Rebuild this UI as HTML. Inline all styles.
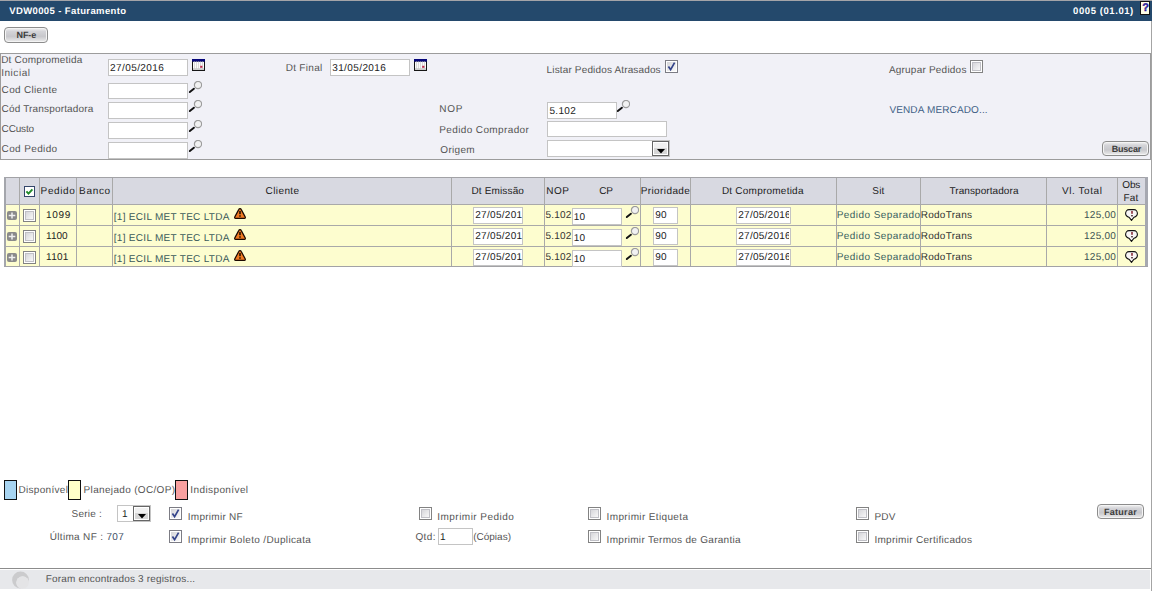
<!DOCTYPE html>
<html><head><meta charset="utf-8">
<style>
*{box-sizing:border-box}
html,body{margin:0;padding:0;background:#fff;width:1153px;height:591px;overflow:hidden;position:relative;font-family:"Liberation Sans",sans-serif}
.a{position:absolute}
.t{position:absolute;white-space:nowrap;font-size:10px;line-height:12px;color:#555;text-rendering:geometricPrecision}
.btn{position:absolute;border:1px solid #8c8c8c;border-radius:4px;background:linear-gradient(#f2f2f2 0,#d4d4d8 25%,#c8c8cc 60%,#ececec 100%);box-shadow:inset 0 0 0 1px #f4f4f4}
</style></head><body>
<svg width="0" height="0" style="position:absolute">
<defs>
<linearGradient id="cbg" x1="0" y1="0" x2="1" y2="1"><stop offset="0" stop-color="#d4d4d8"/><stop offset="1" stop-color="#fafafa"/></linearGradient>
</defs>
</svg>
<div class="a" style="left:0px;top:0px;width:1152px;height:1px;background:#a4a4a8"></div>
<div class="a" style="left:0px;top:1px;width:1152px;height:20px;background:#24496c"></div>
<div class="t" style="left:9.20px;top:6.00px;color:#fff;font-size:9.5px;font-weight:bold;letter-spacing:0.385px;">VDW0005 - Faturamento</div>
<div class="t" style="left:1073.10px;top:6.00px;color:#fff;font-size:9.5px;font-weight:bold;letter-spacing:0.573px;">0005 (01.01)</div>
<div class="a" style="left:1140px;top:1px;width:10px;height:14px;background:#fdfde6;border:1px solid #111;border-left-width:1.5px;border-bottom-width:1.5px"></div>
<div class="t" style="left:1140.5px;width:10px;text-align:center;top:2px;font-size:11px;font-weight:bold;color:#2a1a9a;-webkit-text-stroke:0.4px #2a1a9a">?</div>
<div class="a" style="left:1151px;top:21px;width:1px;height:570px;background:#a4a4a4"></div>
<div class="btn" style="left:4px;top:27px;width:44px;height:16px"></div>
<div class="t" style="left:16.50px;top:29.40px;color:#3c3c3c;font-size:9px;font-weight:bold;letter-spacing:-0.067px;">NF-e</div>
<div class="a" style="left:0px;top:53px;width:1151px;height:107px;background:#f1f1f7;border:1px solid #9c9c9c"></div>
<div class="t" style="left:1.20px;top:55.00px;color:#555;font-size:10px;font-weight:normal;letter-spacing:0.2px;">Dt Comprometida</div>
<div class="t" style="left:1.20px;top:67.50px;color:#555;font-size:10px;font-weight:normal;letter-spacing:0.533px;">Inicial</div>
<div class="a" style="left:108px;top:59px;width:80px;height:17px;background:#fff;border:1px solid #c4c4c4;"></div>
<div class="t" style="left:110.00px;top:63.00px;color:#222;font-size:10px;font-weight:normal;letter-spacing:0.422px;">27/05/2016</div>
<svg class="a" style="left:192px;top:59px" width="13" height="12" viewBox="0 0 13 12"><rect x="0" y="0" width="13" height="12" fill="#151515"/><rect x="1" y="2.5" width="11" height="8.3" fill="#fbfbfb"/><rect x="0" y="0" width="13" height="2.6" fill="#06067a"/><path d="M2.5 2.5v8M4.5 2.5v8M6.5 2.5v8M8.5 2.5v8M10.5 2.5v8" stroke="#d2d2d2" stroke-width="0.8"/><path d="M1 9.6h11" stroke="#c8c8c8" stroke-width="0.8"/><rect x="8.2" y="6.8" width="2.2" height="2" fill="#c02a4c"/></svg>
<div class="t" style="left:285.70px;top:63.00px;color:#555;font-size:10px;font-weight:normal;letter-spacing:0.3px;">Dt Final</div>
<div class="a" style="left:330px;top:59px;width:80px;height:17px;background:#fff;border:1px solid #c4c4c4;"></div>
<div class="t" style="left:332.20px;top:63.00px;color:#222;font-size:10px;font-weight:normal;letter-spacing:0.4px;">31/05/2016</div>
<svg class="a" style="left:414px;top:59px" width="13" height="12" viewBox="0 0 13 12"><rect x="0" y="0" width="13" height="12" fill="#151515"/><rect x="1" y="2.5" width="11" height="8.3" fill="#fbfbfb"/><rect x="0" y="0" width="13" height="2.6" fill="#06067a"/><path d="M2.5 2.5v8M4.5 2.5v8M6.5 2.5v8M8.5 2.5v8M10.5 2.5v8" stroke="#d2d2d2" stroke-width="0.8"/><path d="M1 9.6h11" stroke="#c8c8c8" stroke-width="0.8"/><rect x="8.2" y="6.8" width="2.2" height="2" fill="#c02a4c"/></svg>
<div class="t" style="left:546.60px;top:65.00px;color:#555;font-size:10px;font-weight:normal;letter-spacing:0.148px;">Listar Pedidos Atrasados</div>
<svg class="a" style="left:665px;top:60px" width="13" height="13" viewBox="0 0 13 13"><rect x="0.5" y="0.5" width="12" height="12" fill="#fff" stroke="#7c7c84"/><rect x="2" y="2" width="9" height="9" fill="url(#cbg)"/><path d="M3.4 6.4L5.6 9.6L9.6 2.6" stroke="#34448a" stroke-width="1.7" fill="none"/></svg>
<div class="t" style="left:888.90px;top:65.00px;color:#555;font-size:10px;font-weight:normal;letter-spacing:0.214px;">Agrupar Pedidos</div>
<svg class="a" style="left:970px;top:60px" width="13" height="13" viewBox="0 0 13 13"><rect x="0.5" y="0.5" width="12" height="12" fill="#fff" stroke="#828282"/><rect x="2.5" y="2.5" width="8" height="8" fill="url(#cbg)" stroke="#c0c0c6" stroke-width="1"/></svg>
<div class="t" style="left:1.60px;top:85.00px;color:#555;font-size:10px;font-weight:normal;letter-spacing:0.32px;">Cod Cliente</div>
<div class="a" style="left:108px;top:83px;width:80px;height:16px;background:#fff;border:1px solid #c4c4c4;"></div>
<svg class="a" style="left:188px;top:81px" width="14" height="13" viewBox="0 0 14 13"><circle cx="10" cy="4" r="3.6" fill="#f2f2f2" stroke="#9c9c9c" stroke-width="1.2"/><path d="M1.8 11.1L5.9 7.7" stroke="#111" stroke-width="1.9" stroke-linecap="round"/></svg>
<div class="t" style="left:1.60px;top:104.40px;color:#555;font-size:10px;font-weight:normal;letter-spacing:0.165px;">Cód Transportadora</div>
<div class="a" style="left:108px;top:102px;width:80px;height:17px;background:#fff;border:1px solid #c4c4c4;"></div>
<svg class="a" style="left:188px;top:100px" width="14" height="13" viewBox="0 0 14 13"><circle cx="10" cy="4" r="3.6" fill="#f2f2f2" stroke="#9c9c9c" stroke-width="1.2"/><path d="M1.8 11.1L5.9 7.7" stroke="#111" stroke-width="1.9" stroke-linecap="round"/></svg>
<div class="t" style="left:439.30px;top:104.00px;color:#555;font-size:10px;font-weight:normal;letter-spacing:0.7px;">NOP</div>
<div class="a" style="left:547px;top:102px;width:70px;height:17px;background:#fff;border:1px solid #c4c4c4;"></div>
<div class="t" style="left:549.40px;top:106.00px;color:#222;font-size:10px;font-weight:normal;letter-spacing:0.325px;">5.102</div>
<svg class="a" style="left:616px;top:100px" width="14" height="13" viewBox="0 0 14 13"><circle cx="10" cy="4" r="3.6" fill="#f2f2f2" stroke="#9c9c9c" stroke-width="1.2"/><path d="M1.8 11.1L5.9 7.7" stroke="#111" stroke-width="1.9" stroke-linecap="round"/></svg>
<div class="t" style="left:889.40px;top:104.50px;color:#3f5f86;font-size:10px;font-weight:normal;letter-spacing:0.14px;">VENDA MERCADO...</div>
<div class="t" style="left:1.60px;top:124.00px;color:#555;font-size:10px;font-weight:normal;letter-spacing:-0.16px;">CCusto</div>
<div class="a" style="left:108px;top:122px;width:80px;height:17px;background:#fff;border:1px solid #c4c4c4;"></div>
<svg class="a" style="left:188px;top:120px" width="14" height="13" viewBox="0 0 14 13"><circle cx="10" cy="4" r="3.6" fill="#f2f2f2" stroke="#9c9c9c" stroke-width="1.2"/><path d="M1.8 11.1L5.9 7.7" stroke="#111" stroke-width="1.9" stroke-linecap="round"/></svg>
<div class="t" style="left:439.30px;top:124.70px;color:#555;font-size:10px;font-weight:normal;letter-spacing:0.373px;">Pedido Comprador</div>
<div class="a" style="left:547px;top:121px;width:120px;height:16px;background:#fff;border:1px solid #c4c4c4;"></div>
<div class="t" style="left:1.60px;top:144.20px;color:#555;font-size:10px;font-weight:normal;letter-spacing:0.367px;">Cod Pedido</div>
<div class="a" style="left:108px;top:142px;width:80px;height:17px;background:#fff;border:1px solid #c4c4c4;"></div>
<svg class="a" style="left:188px;top:140px" width="14" height="13" viewBox="0 0 14 13"><circle cx="10" cy="4" r="3.6" fill="#f2f2f2" stroke="#9c9c9c" stroke-width="1.2"/><path d="M1.8 11.1L5.9 7.7" stroke="#111" stroke-width="1.9" stroke-linecap="round"/></svg>
<div class="t" style="left:440.30px;top:144.80px;color:#555;font-size:10px;font-weight:normal;letter-spacing:0.3px;">Origem</div>
<div class="a" style="left:547px;top:140px;width:123px;height:17px;background:#fff;border:1px solid #c4c4c4;"></div>
<div class="a" style="left:652px;top:141px;width:17px;height:15px;border:1px solid #666;box-shadow:inset 0 0 0 1px #fff;background:linear-gradient(#f0f0f0 0,#f0f0f0 45%,#d6d6d6 45%,#d6d6d6 100%)"></div>
<svg class="a" style="left:656.5px;top:149px" width="8" height="5"><path d="M0 0H8L4 4.5Z" fill="#000"/></svg>
<div class="btn" style="left:1102px;top:141px;width:47px;height:15px"></div>
<div class="t" style="left:1111.70px;top:142.80px;color:#3c3c3c;font-size:9px;font-weight:bold;letter-spacing:-0.2px;">Buscar</div>
<div class="a" style="left:4px;top:177px;width:1144px;height:90px;background:#fdfdcf"></div>
<div class="a" style="left:4px;top:177px;width:1144px;height:28px;background:#d8d9e1"></div>
<div class="a" style="left:4px;top:204px;width:1144px;height:1px;background:#a9a9a9"></div>
<div class="a" style="left:4px;top:225px;width:1144px;height:1px;background:#a9a9a9"></div>
<div class="a" style="left:4px;top:246px;width:1144px;height:1px;background:#a9a9a9"></div>
<div class="a" style="left:19px;top:177px;width:1px;height:90px;background:#a9a9a9"></div>
<div class="a" style="left:39px;top:177px;width:1px;height:90px;background:#a9a9a9"></div>
<div class="a" style="left:76px;top:177px;width:1px;height:90px;background:#a9a9a9"></div>
<div class="a" style="left:112px;top:177px;width:1px;height:90px;background:#a9a9a9"></div>
<div class="a" style="left:451px;top:177px;width:1px;height:90px;background:#a9a9a9"></div>
<div class="a" style="left:544px;top:177px;width:1px;height:90px;background:#a9a9a9"></div>
<div class="a" style="left:640px;top:177px;width:1px;height:90px;background:#a9a9a9"></div>
<div class="a" style="left:690px;top:177px;width:1px;height:90px;background:#a9a9a9"></div>
<div class="a" style="left:836px;top:177px;width:1px;height:90px;background:#a9a9a9"></div>
<div class="a" style="left:920px;top:177px;width:1px;height:90px;background:#a9a9a9"></div>
<div class="a" style="left:1046px;top:177px;width:1px;height:90px;background:#a9a9a9"></div>
<div class="a" style="left:1117px;top:177px;width:1px;height:90px;background:#a9a9a9"></div>
<div class="a" style="left:4px;top:177px;width:1144px;height:1px;background:#a2a2a6"></div>
<div class="a" style="left:4px;top:177px;width:2px;height:90px;background:#a4a6ac"></div>
<div class="a" style="left:1145px;top:177px;width:3px;height:90px;background:#a6a8b0"></div>
<div class="a" style="left:4px;top:266px;width:1144px;height:1px;background:#a2a2a6"></div>
<svg class="a" style="left:24px;top:186px" width="11" height="11" viewBox="0 0 11 11"><rect x="0.5" y="0.5" width="10" height="10" fill="#fff" stroke="#34466a"/><path d="M2.4 5.4L4.5 7.6L8.4 3.4" stroke="#208a2a" stroke-width="2" fill="none"/></svg>
<div class="t" style="left:40.60px;top:185.90px;color:#222;font-size:10px;font-weight:normal;letter-spacing:0.62px;">Pedido</div>
<div class="t" style="left:79.10px;top:185.90px;color:#222;font-size:10px;font-weight:normal;letter-spacing:0.675px;">Banco</div>
<div class="t" style="left:265.50px;top:185.90px;color:#222;font-size:10px;font-weight:normal;letter-spacing:0.417px;">Cliente</div>
<div class="t" style="left:471.50px;top:185.90px;color:#222;font-size:10px;font-weight:normal;letter-spacing:0.144px;">Dt Emissão</div>
<div class="t" style="left:546.20px;top:185.90px;color:#222;font-size:10px;font-weight:normal;letter-spacing:0.55px;">NOP</div>
<div class="t" style="left:599.20px;top:185.90px;color:#222;font-size:10px;font-weight:normal;letter-spacing:-0.2px;">CP</div>
<div class="t" style="left:640.70px;top:185.90px;color:#222;font-size:10px;font-weight:normal;letter-spacing:0.4px;">Prioridade</div>
<div class="t" style="left:721.90px;top:185.90px;color:#222;font-size:10px;font-weight:normal;letter-spacing:0.229px;">Dt Comprometida</div>
<div class="t" style="left:872.30px;top:185.90px;color:#222;font-size:10px;font-weight:normal;letter-spacing:0.2px;">Sit</div>
<div class="t" style="left:949.40px;top:185.90px;color:#222;font-size:10px;font-weight:normal;letter-spacing:0.085px;">Transportadora</div>
<div class="t" style="left:1062.10px;top:185.90px;color:#222;font-size:10px;font-weight:normal;letter-spacing:0.55px;">Vl. Total</div>
<div class="t" style="left:1122.30px;top:179.90px;color:#222;font-size:10px;font-weight:normal;letter-spacing:-0.15px;">Obs</div>
<div class="t" style="left:1123.40px;top:192.60px;color:#222;font-size:10px;font-weight:normal;letter-spacing:0.2px;">Fat</div>
<svg class="a" style="left:7px;top:211px" width="10" height="9" viewBox="0 0 10 9"><rect x="0" y="0" width="10" height="9" rx="2" fill="#8a8a8a"/><path d="M5 1.5v6M1.7 4.5h6.6" stroke="#f0f0f0" stroke-width="1.5"/></svg>
<svg class="a" style="left:23px;top:209px" width="13" height="13" viewBox="0 0 13 13"><rect x="0.5" y="0.5" width="12" height="12" fill="#fff" stroke="#828282"/><rect x="2.5" y="2.5" width="8" height="8" fill="url(#cbg)" stroke="#c0c0c6" stroke-width="1"/></svg>
<div class="t" style="left:46.10px;top:210.10px;color:#222;font-size:10px;font-weight:normal;letter-spacing:0.633px;">1099</div>
<div class="t" style="left:113.70px;top:211.90px;color:#3a5a5a;font-size:10px;font-weight:normal;letter-spacing:0.305px;">[1] ECIL MET TEC LTDA</div>
<svg class="a" style="left:234px;top:208px" width="12" height="11" viewBox="0 0 12 11"><path d="M6 0.7C6.6 0.7 7 1 7.3 1.6L11.2 8.9C11.6 9.7 11.3 10.4 10.4 10.4H1.6C0.7 10.4 0.4 9.7 0.8 8.9L4.7 1.6C5 1 5.4 0.7 6 0.7Z" fill="#f07a22" stroke="#1a0800" stroke-width="1.2"/><rect x="5.2" y="3" width="1.6" height="3.2" fill="#241000"/><rect x="5.2" y="7.3" width="1.6" height="1.4" fill="#241000"/></svg>
<div class="a" style="left:473px;top:207px;width:50px;height:17px;background:#fff;border:1px solid #c4c4c4;overflow:hidden"></div>
<div class="t" style="left:475.20px;top:209.80px;color:#222;font-size:10px;font-weight:normal;letter-spacing:0.313px;">27/05/201</div>
<div class="t" style="left:545.60px;top:209.80px;color:#333;font-size:10px;font-weight:normal;letter-spacing:0.175px;">5.102</div>
<div class="a" style="left:572px;top:208px;width:50px;height:17px;background:#fff;border:1px solid #c4c4c4;"></div>
<div class="t" style="left:573.80px;top:211.80px;color:#222;font-size:10px;font-weight:normal;letter-spacing:0.25px;">10</div>
<svg class="a" style="left:625px;top:206px" width="14" height="13" viewBox="0 0 14 13"><circle cx="10" cy="4" r="3.6" fill="#f2f2f2" stroke="#9c9c9c" stroke-width="1.2"/><path d="M1.8 11.1L5.9 7.7" stroke="#111" stroke-width="1.9" stroke-linecap="round"/></svg>
<div class="a" style="left:653px;top:207px;width:25px;height:17px;background:#fff;border:1px solid #c4c4c4;"></div>
<div class="t" style="left:655.20px;top:209.80px;color:#222;font-size:10px;font-weight:normal;letter-spacing:0.25px;">90</div>
<div class="a" style="left:736px;top:207px;width:55px;height:17px;background:#fff;border:1px solid #c4c4c4;"></div>
<div class="t" style="left:738.30px;top:209.80px;color:#222;font-size:10px;font-weight:normal;letter-spacing:0.25px;width:51px;overflow:hidden">27/05/2016</div>
<div class="t" style="left:836.70px;top:210.30px;color:#3a6060;font-size:10px;font-weight:normal;letter-spacing:0.443px;">Pedido Separado</div>
<div class="t" style="left:920.70px;top:210.30px;color:#333;font-size:10px;font-weight:normal;letter-spacing:0.275px;">RodoTrans</div>
<div class="t" style="left:1084.00px;top:209.80px;color:#3c5252;font-size:10px;font-weight:normal;letter-spacing:0.26px;">125,00</div>
<svg class="a" style="left:1125px;top:209px" width="13" height="12" viewBox="0 0 13 12"><path d="M4 0.6H9C11 0.6 12.4 2.5 12.4 4.5C12.4 6.4 10.6 7.8 8.6 8.6L6.5 11.4L4.4 8.6C2.4 7.8 0.6 6.4 0.6 4.5C0.6 2.5 2 0.6 4 0.6Z" fill="#f8f6f6" stroke="#111" stroke-width="1.1"/><rect x="6.3" y="2" width="1.4" height="2.8" fill="#7a1020"/><rect x="6.3" y="6" width="1.4" height="1.4" fill="#2a0a10"/></svg>
<svg class="a" style="left:7px;top:232px" width="10" height="9" viewBox="0 0 10 9"><rect x="0" y="0" width="10" height="9" rx="2" fill="#8a8a8a"/><path d="M5 1.5v6M1.7 4.5h6.6" stroke="#f0f0f0" stroke-width="1.5"/></svg>
<svg class="a" style="left:23px;top:230px" width="13" height="13" viewBox="0 0 13 13"><rect x="0.5" y="0.5" width="12" height="12" fill="#fff" stroke="#828282"/><rect x="2.5" y="2.5" width="8" height="8" fill="url(#cbg)" stroke="#c0c0c6" stroke-width="1"/></svg>
<div class="t" style="left:46.10px;top:231.10px;color:#222;font-size:10px;font-weight:normal;letter-spacing:-0.0px;">1100</div>
<div class="t" style="left:113.70px;top:232.90px;color:#3a5a5a;font-size:10px;font-weight:normal;letter-spacing:0.305px;">[1] ECIL MET TEC LTDA</div>
<svg class="a" style="left:234px;top:229px" width="12" height="11" viewBox="0 0 12 11"><path d="M6 0.7C6.6 0.7 7 1 7.3 1.6L11.2 8.9C11.6 9.7 11.3 10.4 10.4 10.4H1.6C0.7 10.4 0.4 9.7 0.8 8.9L4.7 1.6C5 1 5.4 0.7 6 0.7Z" fill="#f07a22" stroke="#1a0800" stroke-width="1.2"/><rect x="5.2" y="3" width="1.6" height="3.2" fill="#241000"/><rect x="5.2" y="7.3" width="1.6" height="1.4" fill="#241000"/></svg>
<div class="a" style="left:473px;top:228px;width:50px;height:17px;background:#fff;border:1px solid #c4c4c4;overflow:hidden"></div>
<div class="t" style="left:475.20px;top:230.80px;color:#222;font-size:10px;font-weight:normal;letter-spacing:0.313px;">27/05/201</div>
<div class="t" style="left:545.60px;top:230.80px;color:#333;font-size:10px;font-weight:normal;letter-spacing:0.175px;">5.102</div>
<div class="a" style="left:572px;top:229px;width:50px;height:17px;background:#fff;border:1px solid #c4c4c4;"></div>
<div class="t" style="left:573.80px;top:232.80px;color:#222;font-size:10px;font-weight:normal;letter-spacing:0.25px;">10</div>
<svg class="a" style="left:625px;top:227px" width="14" height="13" viewBox="0 0 14 13"><circle cx="10" cy="4" r="3.6" fill="#f2f2f2" stroke="#9c9c9c" stroke-width="1.2"/><path d="M1.8 11.1L5.9 7.7" stroke="#111" stroke-width="1.9" stroke-linecap="round"/></svg>
<div class="a" style="left:653px;top:228px;width:25px;height:17px;background:#fff;border:1px solid #c4c4c4;"></div>
<div class="t" style="left:655.20px;top:230.80px;color:#222;font-size:10px;font-weight:normal;letter-spacing:0.25px;">90</div>
<div class="a" style="left:736px;top:228px;width:55px;height:17px;background:#fff;border:1px solid #c4c4c4;"></div>
<div class="t" style="left:738.30px;top:230.80px;color:#222;font-size:10px;font-weight:normal;letter-spacing:0.25px;width:51px;overflow:hidden">27/05/2016</div>
<div class="t" style="left:836.70px;top:231.30px;color:#3a6060;font-size:10px;font-weight:normal;letter-spacing:0.443px;">Pedido Separado</div>
<div class="t" style="left:920.70px;top:231.30px;color:#333;font-size:10px;font-weight:normal;letter-spacing:0.275px;">RodoTrans</div>
<div class="t" style="left:1084.00px;top:230.80px;color:#3c5252;font-size:10px;font-weight:normal;letter-spacing:0.26px;">125,00</div>
<svg class="a" style="left:1125px;top:230px" width="13" height="12" viewBox="0 0 13 12"><path d="M4 0.6H9C11 0.6 12.4 2.5 12.4 4.5C12.4 6.4 10.6 7.8 8.6 8.6L6.5 11.4L4.4 8.6C2.4 7.8 0.6 6.4 0.6 4.5C0.6 2.5 2 0.6 4 0.6Z" fill="#f8f6f6" stroke="#111" stroke-width="1.1"/><rect x="6.3" y="2" width="1.4" height="2.8" fill="#7a1020"/><rect x="6.3" y="6" width="1.4" height="1.4" fill="#2a0a10"/></svg>
<svg class="a" style="left:7px;top:253px" width="10" height="9" viewBox="0 0 10 9"><rect x="0" y="0" width="10" height="9" rx="2" fill="#8a8a8a"/><path d="M5 1.5v6M1.7 4.5h6.6" stroke="#f0f0f0" stroke-width="1.5"/></svg>
<svg class="a" style="left:23px;top:251px" width="13" height="13" viewBox="0 0 13 13"><rect x="0.5" y="0.5" width="12" height="12" fill="#fff" stroke="#828282"/><rect x="2.5" y="2.5" width="8" height="8" fill="url(#cbg)" stroke="#c0c0c6" stroke-width="1"/></svg>
<div class="t" style="left:46.10px;top:252.10px;color:#222;font-size:10px;font-weight:normal;letter-spacing:0.233px;">1101</div>
<div class="t" style="left:113.70px;top:253.90px;color:#3a5a5a;font-size:10px;font-weight:normal;letter-spacing:0.305px;">[1] ECIL MET TEC LTDA</div>
<svg class="a" style="left:234px;top:250px" width="12" height="11" viewBox="0 0 12 11"><path d="M6 0.7C6.6 0.7 7 1 7.3 1.6L11.2 8.9C11.6 9.7 11.3 10.4 10.4 10.4H1.6C0.7 10.4 0.4 9.7 0.8 8.9L4.7 1.6C5 1 5.4 0.7 6 0.7Z" fill="#f07a22" stroke="#1a0800" stroke-width="1.2"/><rect x="5.2" y="3" width="1.6" height="3.2" fill="#241000"/><rect x="5.2" y="7.3" width="1.6" height="1.4" fill="#241000"/></svg>
<div class="a" style="left:473px;top:249px;width:50px;height:17px;background:#fff;border:1px solid #c4c4c4;overflow:hidden"></div>
<div class="t" style="left:475.20px;top:251.80px;color:#222;font-size:10px;font-weight:normal;letter-spacing:0.313px;">27/05/201</div>
<div class="t" style="left:545.60px;top:251.80px;color:#333;font-size:10px;font-weight:normal;letter-spacing:0.175px;">5.102</div>
<div class="a" style="left:572px;top:250px;width:50px;height:17px;background:#fff;border:1px solid #c4c4c4;"></div>
<div class="t" style="left:573.80px;top:253.80px;color:#222;font-size:10px;font-weight:normal;letter-spacing:0.25px;">10</div>
<svg class="a" style="left:625px;top:248px" width="14" height="13" viewBox="0 0 14 13"><circle cx="10" cy="4" r="3.6" fill="#f2f2f2" stroke="#9c9c9c" stroke-width="1.2"/><path d="M1.8 11.1L5.9 7.7" stroke="#111" stroke-width="1.9" stroke-linecap="round"/></svg>
<div class="a" style="left:653px;top:249px;width:25px;height:17px;background:#fff;border:1px solid #c4c4c4;"></div>
<div class="t" style="left:655.20px;top:251.80px;color:#222;font-size:10px;font-weight:normal;letter-spacing:0.25px;">90</div>
<div class="a" style="left:736px;top:249px;width:55px;height:17px;background:#fff;border:1px solid #c4c4c4;"></div>
<div class="t" style="left:738.30px;top:251.80px;color:#222;font-size:10px;font-weight:normal;letter-spacing:0.25px;width:51px;overflow:hidden">27/05/2016</div>
<div class="t" style="left:836.70px;top:252.30px;color:#3a6060;font-size:10px;font-weight:normal;letter-spacing:0.443px;">Pedido Separado</div>
<div class="t" style="left:920.70px;top:252.30px;color:#333;font-size:10px;font-weight:normal;letter-spacing:0.275px;">RodoTrans</div>
<div class="t" style="left:1084.00px;top:251.80px;color:#3c5252;font-size:10px;font-weight:normal;letter-spacing:0.26px;">125,00</div>
<svg class="a" style="left:1125px;top:251px" width="13" height="12" viewBox="0 0 13 12"><path d="M4 0.6H9C11 0.6 12.4 2.5 12.4 4.5C12.4 6.4 10.6 7.8 8.6 8.6L6.5 11.4L4.4 8.6C2.4 7.8 0.6 6.4 0.6 4.5C0.6 2.5 2 0.6 4 0.6Z" fill="#f8f6f6" stroke="#111" stroke-width="1.1"/><rect x="6.3" y="2" width="1.4" height="2.8" fill="#7a1020"/><rect x="6.3" y="6" width="1.4" height="1.4" fill="#2a0a10"/></svg>
<div class="a" style="left:4px;top:480px;width:13px;height:20px;border:1px solid #111;background:#a8d4f0"></div>
<div class="t" style="left:18.50px;top:485.00px;color:#555;font-size:10px;font-weight:normal;letter-spacing:0.3px;">Disponível</div>
<div class="a" style="left:68px;top:480px;width:13px;height:20px;border:1px solid #111;background:#ffffc8"></div>
<div class="t" style="left:83.60px;top:485.00px;color:#555;font-size:10px;font-weight:normal;letter-spacing:0.331px;">Planejado (OC/OP)</div>
<div class="a" style="left:175px;top:480px;width:13px;height:20px;border:1px solid #111;background:#f8a0a0"></div>
<div class="t" style="left:190.30px;top:485.00px;color:#555;font-size:10px;font-weight:normal;letter-spacing:0.4px;">Indisponível</div>
<div class="t" style="left:71.60px;top:509.00px;color:#555;font-size:10px;font-weight:normal;letter-spacing:0.233px;">Serie :</div>
<div class="a" style="left:117px;top:505px;width:34px;height:17px;background:#fff;border:1px solid #c4c4c4;"></div>
<div class="t" style="left:122.00px;top:509.00px;color:#222;font-size:10px;font-weight:normal;letter-spacing:0.25px;">1</div>
<div class="a" style="left:133px;top:506px;width:17px;height:15px;border:1px solid #666;box-shadow:inset 0 0 0 1px #fff;background:linear-gradient(#f0f0f0 0,#f0f0f0 45%,#d6d6d6 45%,#d6d6d6 100%)"></div>
<svg class="a" style="left:137.5px;top:514px" width="8" height="5"><path d="M0 0H8L4 4.5Z" fill="#000"/></svg>
<svg class="a" style="left:169px;top:507px" width="13" height="13" viewBox="0 0 13 13"><rect x="0.5" y="0.5" width="12" height="12" fill="#fff" stroke="#7c7c84"/><rect x="2" y="2" width="9" height="9" fill="url(#cbg)"/><path d="M3.4 6.4L5.6 9.6L9.6 2.6" stroke="#34448a" stroke-width="1.7" fill="none"/></svg>
<div class="t" style="left:187.80px;top:511.80px;color:#555;font-size:10px;font-weight:normal;letter-spacing:0.26px;">Imprimir NF</div>
<div class="t" style="left:49.70px;top:531.60px;color:#555;font-size:10px;font-weight:normal;letter-spacing:0.329px;">Última NF : <span style="color:#3e4e66">707</span></div>
<svg class="a" style="left:169px;top:530px" width="13" height="13" viewBox="0 0 13 13"><rect x="0.5" y="0.5" width="12" height="12" fill="#fff" stroke="#7c7c84"/><rect x="2" y="2" width="9" height="9" fill="url(#cbg)"/><path d="M3.4 6.4L5.6 9.6L9.6 2.6" stroke="#34448a" stroke-width="1.7" fill="none"/></svg>
<div class="t" style="left:187.80px;top:534.70px;color:#555;font-size:10px;font-weight:normal;letter-spacing:0.344px;">Imprimir Boleto /Duplicata</div>
<svg class="a" style="left:419px;top:507px" width="13" height="13" viewBox="0 0 13 13"><rect x="0.5" y="0.5" width="12" height="12" fill="#fff" stroke="#828282"/><rect x="2.5" y="2.5" width="8" height="8" fill="url(#cbg)" stroke="#c0c0c6" stroke-width="1"/></svg>
<div class="t" style="left:437.30px;top:511.80px;color:#555;font-size:10px;font-weight:normal;letter-spacing:0.464px;">Imprimir Pedido</div>
<div class="t" style="left:415.40px;top:532.10px;color:#555;font-size:10px;font-weight:normal;letter-spacing:0.433px;">Qtd:</div>
<div class="a" style="left:438px;top:528px;width:35px;height:17px;background:#fff;border:1px solid #c4c4c4;"></div>
<div class="t" style="left:439.90px;top:532.10px;color:#222;font-size:10px;font-weight:normal;letter-spacing:0.25px;">1</div>
<div class="t" style="left:473.20px;top:532.10px;color:#555;font-size:10px;font-weight:normal;letter-spacing:0.0px;">(Cópias)</div>
<svg class="a" style="left:588px;top:507px" width="13" height="13" viewBox="0 0 13 13"><rect x="0.5" y="0.5" width="12" height="12" fill="#fff" stroke="#828282"/><rect x="2.5" y="2.5" width="8" height="8" fill="url(#cbg)" stroke="#c0c0c6" stroke-width="1"/></svg>
<div class="t" style="left:606.60px;top:511.80px;color:#555;font-size:10px;font-weight:normal;letter-spacing:0.362px;">Imprimir Etiqueta</div>
<svg class="a" style="left:588px;top:530px" width="13" height="13" viewBox="0 0 13 13"><rect x="0.5" y="0.5" width="12" height="12" fill="#fff" stroke="#828282"/><rect x="2.5" y="2.5" width="8" height="8" fill="url(#cbg)" stroke="#c0c0c6" stroke-width="1"/></svg>
<div class="t" style="left:606.60px;top:534.50px;color:#555;font-size:10px;font-weight:normal;letter-spacing:0.288px;">Imprimir Termos de Garantia</div>
<svg class="a" style="left:856px;top:507px" width="13" height="13" viewBox="0 0 13 13"><rect x="0.5" y="0.5" width="12" height="12" fill="#fff" stroke="#828282"/><rect x="2.5" y="2.5" width="8" height="8" fill="url(#cbg)" stroke="#c0c0c6" stroke-width="1"/></svg>
<div class="t" style="left:874.40px;top:512.30px;color:#555;font-size:10px;font-weight:normal;letter-spacing:0.2px;">PDV</div>
<svg class="a" style="left:856px;top:530px" width="13" height="13" viewBox="0 0 13 13"><rect x="0.5" y="0.5" width="12" height="12" fill="#fff" stroke="#828282"/><rect x="2.5" y="2.5" width="8" height="8" fill="url(#cbg)" stroke="#c0c0c6" stroke-width="1"/></svg>
<div class="t" style="left:874.40px;top:534.50px;color:#555;font-size:10px;font-weight:normal;letter-spacing:0.295px;">Imprimir Certificados</div>
<div class="btn" style="left:1097px;top:504px;width:47px;height:15px"></div>
<div class="t" style="left:1103.90px;top:505.60px;color:#3c3c3c;font-size:9px;font-weight:bold;letter-spacing:0.3px;">Faturar</div>
<div class="a" style="left:0px;top:568px;width:1151px;height:1px;background:#8c8c8c"></div>
<div class="a" style="left:0px;top:570px;width:1150px;height:19px;background:#e7e8eb"></div>
<svg class="a" style="left:10px;top:570px" width="22" height="20" viewBox="0 0 22 20"><defs><mask id="cr"><rect width="22" height="20" fill="#fff"/><circle cx="12.6" cy="12.6" r="6.3" fill="#000"/></mask></defs><circle cx="10.5" cy="10" r="8.4" fill="#cbcbcd" mask="url(#cr)"/><circle cx="12.6" cy="12.6" r="6.2" fill="#e4e4e6"/></svg>
<div class="t" style="left:45.80px;top:573.80px;color:#555;font-size:10px;font-weight:normal;letter-spacing:0.155px;">Foram encontrados 3 registros...</div>
</body></html>
